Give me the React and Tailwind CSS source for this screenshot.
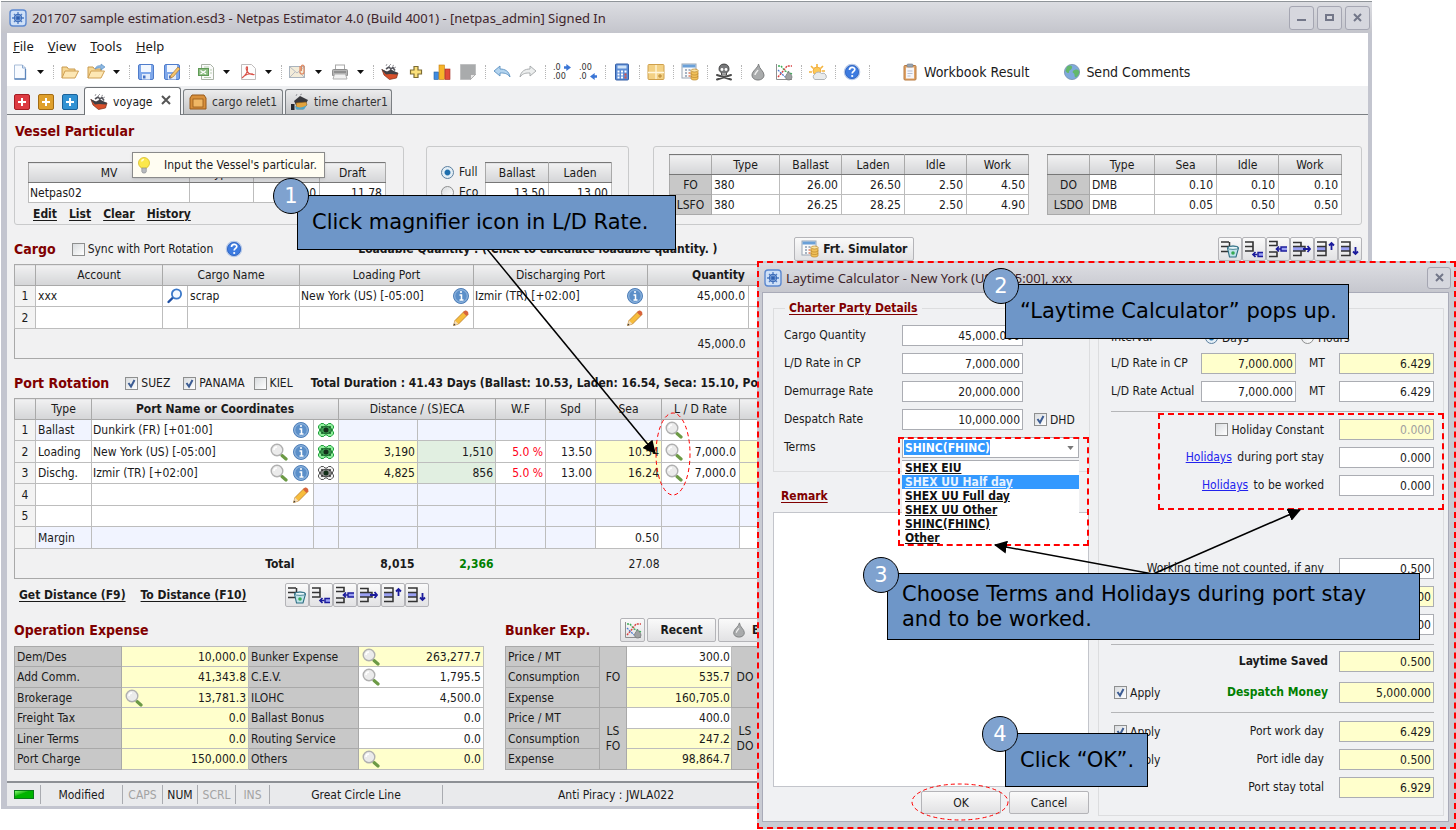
import clsx from "clsx";

// ---------- small icons ----------

function Svg({ size = "size-[18px]", children }) {
  return (
    <svg viewBox="0 0 18 18" className={clsx("block shrink-0", size)} fill="none" aria-hidden="true">
      {children}
    </svg>
  );
}

const AppIcon = () => (
  <Svg>
    <rect x="1" y="1" width="16" height="16" rx="3" fill="#cfe0f7" stroke="#5c88cf" strokeWidth="1.4" />
    <path d="M9 3v12M3 9h12M5 5l8 8M13 5l-8 8" stroke="#4f7dc6" strokeWidth="1.3" />
    <circle cx="9" cy="9" r="3.6" stroke="#3f6db8" strokeWidth="1.2" />
    <circle cx="9" cy="9" r="1.6" fill="#2f5fae" />
  </Svg>
);

const NewIcon = () => (
  <Svg>
    <path d="M3.5 2h8l3 3v11h-11z" fill="#f8fbff" stroke="#a8bdd8" />
    <path d="M14.5 6v10h-11" stroke="#5c86bc" strokeWidth="1.3" />
    <path d="M11.5 2v3h3" stroke="#8aa8cf" />
  </Svg>
);

const FolderIcon = ({ arrow }) => (
  <Svg>
    <path d="M1 15V4h5l1.5 2H14v2" fill="#f7d894" stroke="#c99a4e" />
    <path d="M1 15l3-7h13.500l-3.500 7z" fill="#fde7b4" stroke="#cf9f52" />
    {arrow && <path d="M8 6c1-3 4-4 6-3V1l4 3-4 3V5c-2-.6-4 0-6 1z" fill="#8db8e3" stroke="#4f86bd" strokeWidth=".6" />}
  </Svg>
);

const SaveIcon = ({ edit }) => (
  <Svg>
    <rect x="1.500" y="1.500" width="15" height="15" rx="1.500" fill="#7fa8ea" stroke="#4f7ccb" />
    <rect x="4" y="2" width="10" height="7" fill="#f2f7fe" />
    <rect x="5" y="11" width="8" height="5.500" fill="#e3ecfa" />
    <rect x="6" y="12.500" width="2.500" height="3" fill="#4572c4" />
    {edit && <path d="M7 15l1-3 7-8 2 2-7 8z" fill="#f5c46b" stroke="#a6763a" strokeWidth=".7" />}
  </Svg>
);

const ExcelIcon = () => (
  <Svg>
    <path d="M4.500 1.500h9l3 3v12h-12z" fill="#fafafa" stroke="#a9b3a5" />
    <path d="M7 4h5M7 14.500h7M13 7h2M13 10h2" stroke="#b7cdb0" />
    <rect x="1.500" y="5.500" width="10" height="7" fill="#8cbd82" stroke="#5f9a56" />
    <path d="M3.500 7.500l5.500 3.500M9 7.500L3.500 11" stroke="#fff" strokeWidth="1.300" />
  </Svg>
);

const PdfIcon = () => (
  <Svg>
    <path d="M2.500 1.500h10l4 4v11h-14z" fill="#fdfdfd" stroke="#c0bcbc" />
    <path d="M3 15c4-3 6-7 5.500-10.500C8 3 6.500 4 7.500 7c1 2.500 3.500 5 8 4.500M5 13c3-2 6-2.500 9-2" stroke="#d9534a" strokeWidth="1.100" />
  </Svg>
);

const MailIcon = () => (
  <Svg>
    <rect x=".5" y="3.500" width="15" height="11" fill="#f3ecd9" stroke="#a9b3bd" />
    <path d="M1 4l7 6 7-6M1 14l5-5M15 14l-5-5" stroke="#b9bcc2" />
    <path d="M11 3v6a2 2 0 004 0V3.500a1.300 1.300 0 00-2.600 0V8" stroke="#e08a63" strokeWidth="1.200" />
  </Svg>
);

const PrintIcon = () => (
  <Svg>
    <rect x="4.500" y="2" width="9" height="5" fill="#fff" stroke="#a8a8a8" />
    <path d="M1.500 7.500q0-1 1-1h13q1 0 1 1v5h-15z" fill="#b4b4b4" stroke="#8f8f8f" />
    <path d="M3.500 11h11l1.500 5h-14z" fill="#f1f1f1" stroke="#b0b0b0" />
    <path d="M3 9h12" stroke="#6c6c6c" />
  </Svg>
);

const ShipIcon = () => (
  <Svg>
    <path d="M1 6.500l5 3 11 0.500-1.500 5-7 1.500L3 12z" fill="#d8502b" stroke="#7e2c15" strokeWidth=".7" />
    <path d="M0 6l6 2.500 4-2 7 3.500-1 1.500-7-.5-4 .5z" fill="#3f3f44" />
    <path d="M5 6l3-2 2 2M9 6.500l3-2 2 3" stroke="#55555c" strokeWidth="1.600" />
    <path d="M5 3l1-2M8 3l2-2M11 3.500l2-1.500M13 5l2-1" stroke="#9d9da2" />
  </Svg>
);

const GoldPlusIcon = () => (
  <Svg>
    <path d="M7 3.500h4V7h3.500v4H11v3.500H7V11H3.500V7H7z" fill="#fbe07a" stroke="#7d6c33" strokeWidth="1.200" />
  </Svg>
);

const BarsIcon = () => (
  <Svg>
    <rect x="1" y="9" width="4.500" height="7.500" fill="#3f8be0" stroke="#24629f" strokeWidth=".6" />
    <rect x="6" y="2" width="5.500" height="14.500" fill="#f7b429" stroke="#bf7c13" strokeWidth=".6" />
    <rect x="12" y="6" width="5" height="10.500" fill="#e04a3a" stroke="#a22a1e" strokeWidth=".6" />
  </Svg>
);

const NoteIcon = () => (
  <Svg>
    <path d="M1.500 1.500h15v10l-5 5h-10z" fill="#a9abac" stroke="#bfc0c1" />
    <path d="M16.500 11.500h-5v5z" fill="#e8e8e8" stroke="#999" strokeWidth=".6" />
  </Svg>
);

const UndoIcon = () => (
  <Svg>
    <path d="M1 8l6-5v3c5 0 9 2 10 8-3-4-6-4-10-4v3z" fill="#b3d4ef" stroke="#5e92c2" strokeWidth=".9" />
  </Svg>
);

const RedoIcon = () => (
  <Svg>
    <path d="M17 8l-6-5v3C6 6 2 8 1 14c3-4 6-4 10-4v3z" fill="#eceeee" stroke="#a3a6a8" strokeWidth=".9" />
  </Svg>
);

// decimal point buttons, digits stay live text
const DecimalIcon = ({ more }) => (
  <span className="relative block w-[18px] text-left text-[9px] leading-[9px] text-[#333]">
    <span className="block">{more ? ".0" : ".00"}</span>
    <span className="block">{more ? ".00" : ".0"}</span>
    <svg
      viewBox="0 0 6 6"
      className={clsx("absolute right-0 size-[7px]", more ? "top-px" : "bottom-px")}
      aria-hidden="true"
    >
      <path d={more ? "M0 2h2V0l4 3-4 3V4H0z" : "M6 2H4V0L0 3l4 3V4h2z"} fill="#3b76d6" />
    </svg>
  </span>
);

const CalcIcon = () => (
  <Svg>
    <rect x="2.500" y="1" width="13" height="16" rx="1" fill="#5d8dd6" stroke="#345fa6" />
    <rect x="4.500" y="2.500" width="9" height="3" fill="#cfe3f8" />
    <g fill="#fff">
      <rect x="4.500" y="7.500" width="2" height="2" />
      <rect x="8" y="7.500" width="2" height="2" />
      <rect x="11.500" y="7.500" width="2" height="2" />
      <rect x="4.500" y="10.500" width="2" height="2" />
      <rect x="8" y="10.500" width="2" height="2" />
      <rect x="4.500" y="13.500" width="2" height="2" />
      <rect x="8" y="13.500" width="2" height="2" />
    </g>
    <rect x="11.500" y="10.500" width="2" height="2" fill="#e05345" />
    <rect x="11.500" y="13.500" width="2" height="2" fill="#e05345" />
  </Svg>
);

const GridIcon = () => (
  <Svg>
    <rect x="1" y="1.500" width="16" height="15" rx="1" fill="#f3d184" stroke="#cfa04c" />
    <path d="M9 2v14M1 9.500h16" stroke="#fff6dc" strokeWidth="1.300" />
    <path d="M13 11v4M11 13h4" stroke="#b78432" />
  </Svg>
);

const SimIcon = () => (
  <Svg>
    <rect x="1" y="1" width="14" height="14" fill="#fafafa" stroke="#9aa5b3" />
    <rect x="1.500" y="1.500" width="13" height="3" fill="#6aa0d8" />
    <path d="M4 7h2M7.500 7h2M4 10h2M4 13h2" stroke="#8b9bb0" strokeWidth="1.500" />
    <path d="M7.500 10h2M7.500 13h2" stroke="#de7b5a" strokeWidth="1.500" />
    <path d="M10 7.500v8c0 2 7 2 7 0v-8" fill="#f1c15a" stroke="#b8842b" strokeWidth=".7" />
    <ellipse cx="13.500" cy="7.500" rx="3.500" ry="1.500" fill="#fbe3a0" stroke="#b8842b" strokeWidth=".7" />
    <path d="M10 10.500c0 2 7 2 7 0M10 13c0 2 7 2 7 0" stroke="#b8842b" strokeWidth=".7" />
  </Svg>
);

const SkullIcon = () => (
  <Svg>
    <path d="M2 12l14 4.500M16 12L2 16.500" stroke="#4b4b4b" strokeWidth="2" strokeLinecap="round" />
    <path d="M9 1C5.500 1 4 3.500 4 6c0 2 1 3 2.500 3.700V12h5V9.700C13 9 14 8 14 6c0-2.500-1.500-5-5-5z" fill="#77787a" stroke="#333" strokeWidth=".8" />
    <circle cx="7" cy="6.500" r="1.400" fill="#fff" />
    <circle cx="11" cy="6.500" r="1.400" fill="#fff" />
    <path d="M8 10v2M10 10v2" stroke="#eee" strokeWidth=".8" />
  </Svg>
);

const DropIcon = ({ size }) => (
  <Svg size={size}>
    <path d="M9.500 1C9 5 3 8 3 12c0 3 2.500 5 6 5s6-2 6-5c0-4-5-6-5.500-11z" fill="#a9abac" stroke="#7b7d7e" />
    <path d="M6 12c0-2 2-3 3-5" stroke="#eee" strokeWidth="1.400" />
  </Svg>
);

const TrendIcon = () => (
  <Svg>
    <path d="M1.500 1v15.500H17" stroke="#8e8e8e" />
    <path d="M3 3h3l4 5 7 3" stroke="#3fae5a" strokeDasharray="2 1" strokeWidth="1.400" />
    <path d="M3 14l6-7 3-4h5" stroke="#d94343" strokeDasharray="2 1" strokeWidth="1.400" />
    <path d="M3 7l4 4 3 3" stroke="#4a7ad0" strokeDasharray="2 1" strokeWidth="1.300" />
    <path d="M13.500 8c0 2-3 3.500-3 6 0 1.700 1.500 3 3.300 3s3.200-1.300 3.200-3c0-2.500-3-3.500-3.500-6z" fill="#9fa1a2" stroke="#6f7172" strokeWidth=".7" />
  </Svg>
);

const SunIcon = () => (
  <Svg>
    <path d="M8 1v3M2 3l2.500 2.500M14 3l-2.500 2.500M0 9h3M13 8h3" stroke="#f4b43c" strokeWidth="1.600" />
    <circle cx="8" cy="8" r="4" fill="#fcc858" stroke="#ee9f2a" strokeWidth=".7" />
    <path d="M6 16.500a3 3 0 010-5.500 4 4 0 016.500-.5 3 3 0 013 6z" fill="#e9ebec" stroke="#b1b5b8" />
  </Svg>
);

const HelpIcon = () => (
  <Svg>
    <circle cx="9" cy="9" r="7.500" fill="#3d7be0" stroke="#b5c8e8" strokeWidth="1.600" />
    <circle cx="9" cy="9" r="6.600" stroke="#2b5fbd" strokeWidth=".8" />
    <path d="M6.500 7c0-3.500 5.300-3.300 5.300-.5 0 1.800-2.600 2-2.600 4" stroke="#fff" strokeWidth="1.700" />
    <circle cx="9.200" cy="13" r="1.100" fill="#fff" />
  </Svg>
);

const ClipboardIcon = () => (
  <Svg>
    <rect x="3" y="2.500" width="12" height="14.500" rx="1" fill="#e0a468" stroke="#b87a40" />
    <rect x="5" y="4.500" width="8" height="11" fill="#f6f6fa" />
    <rect x="6" y="1" width="6" height="3" rx="1" fill="#9aa6b2" stroke="#6f7b88" strokeWidth=".6" />
    <path d="M6.500 8h5M6.500 10.500h5M6.500 13h3" stroke="#b5bdd0" />
  </Svg>
);

const GlobeIcon = () => (
  <Svg>
    <circle cx="9" cy="9" r="7.600" fill="#7fa9dc" stroke="#7590ad" strokeWidth=".8" />
    <path d="M4 3.500c3-2 6-1 5 1.500s-3 2-3 4-2 1-3.500-1M10 8c2-2 5-2 6 0s-1 5-3 6.500c-2 0-1-3-2-4s-2-1-1-2.500z" fill="#63b86b" />
  </Svg>
);

const BulbIcon = () => (
  <Svg>
    <circle cx="9" cy="7" r="5.500" fill="#fbe84c" stroke="#d6ba25" strokeWidth=".8" />
    <path d="M6.500 5.500c.5-1.500 1.500-2 2.500-2" stroke="#fffbd0" strokeWidth="1.300" />
    <path d="M6.800 12h4.500v3.500l-1 1.500H7.800l-1-1.500z" fill="#b8bbbf" stroke="#85888c" strokeWidth=".6" />
  </Svg>
);

const CrateIcon = () => (
  <Svg>
    <path d="M3 2h12l2 3v11H1V5z" fill="#d8903c" stroke="#96591a" />
    <rect x="4" y="6" width="10" height="8" fill="#f0b765" stroke="#96591a" strokeWidth=".8" />
  </Svg>
);

const CharterIcon = () => (
  <Svg>
    <path d="M3 8l6-5 8 4-3 5H5z" fill="#38383d" />
    <path d="M5 10l10-1 1 3-4 4H6z" fill="#e2a33c" stroke="#8a5d19" strokeWidth=".6" />
    <path d="M4 13c3 2 8 2 12-1l-3 4.500H5z" fill="#4fa4c6" />
    <rect x="0" y="11" width="3.500" height="6" fill="#23272f" />
    <path d="M5 3l1-2M9 2l2-1" stroke="#9a9aa0" />
  </Svg>
);

const MagnifierIcon = () => (
  <Svg>
    <path d="M12 12.500l4 3.500" stroke="#6c9a45" strokeWidth="3.200" strokeLinecap="round" />
    <circle cx="7" cy="7" r="5.800" fill="#ebebeb" stroke="#b0b0b0" strokeWidth="1.400" />
    <path d="M4 7c0-2 1-3 3-3" stroke="#fff" strokeWidth="1.500" />
  </Svg>
);

const BlueSearchIcon = () => (
  <Svg>
    <path d="M7 10.500L2.500 15" stroke="#1e4fa3" strokeWidth="2.400" strokeLinecap="round" />
    <circle cx="10.500" cy="7" r="4.600" fill="#f3f9ff" stroke="#3a78c9" strokeWidth="1.800" />
  </Svg>
);

const InfoIcon = () => (
  <Svg>
    <circle cx="9" cy="9" r="7.500" fill="#5b8fc9" stroke="#4f7fb8" />
    <circle cx="9" cy="9" r="6.300" stroke="#a9c8e8" strokeWidth=".8" />
    <path d="M9 4v2M7.500 8H9.500v5M7.500 13h4" stroke="#fff" strokeWidth="1.500" />
  </Svg>
);

const PencilIcon = () => (
  <Svg>
    <path d="M1.500 16.500l1.500-5L12.500 2l3.500 3.500-9.500 9.500z" fill="#f7bd3c" stroke="#b77b28" strokeWidth=".8" />
    <path d="M12.500 2c1.500-1.500 5 1.500 3.500 3.500l-1.500 1.500-3.500-3.500z" fill="#d8643c" />
    <path d="M1.500 16.500l1.500-5 3.500 3.500z" fill="#f3dcb8" />
    <path d="M1.500 16.500l.6-2 1.500 1.400z" fill="#333" />
  </Svg>
);

const TargetIcon = ({ on }) => (
  <Svg>
    <path
      d="M4 2.500h2.500l1.500 1.500h2l1.500-1.500h2.500l2.500 2.500v2l-1 1v2l1 1v2l-2.500 2.500h-2.500l-1.500-1.500h-2l-1.500 1.500H4l-2.500-2.500v-2l1-1v-2l-1-1V5z"
      fill={on ? "#8df09a" : "#f2f2f2"}
      stroke={on ? "#23a03f" : "#555"}
    />
    <ellipse cx="9" cy="9" rx="5.500" ry="3.800" fill={on ? "#3c9a50" : "#8d8d8d"} stroke={on ? "#125c24" : "#333"} strokeWidth=".9" />
    <circle cx="9" cy="9" r="2.500" fill="#14301a" />
    <circle cx="5" cy="6" r="1" fill={on ? "#125c24" : "#333"} />
    <circle cx="13" cy="6" r="1" fill={on ? "#125c24" : "#333"} />
    <circle cx="5" cy="12" r="1" fill={on ? "#125c24" : "#333"} />
    <circle cx="13" cy="12" r="1" fill={on ? "#125c24" : "#333"} />
  </Svg>
);

const rowIcons = {
  "Delete row": (
    <>
      <path d="M0 2h8M0 6.500h8M0 11.500h8M8.500 2v4" stroke="#333" strokeWidth="1.500" />
      <path d="M6.500 8l2 9h6.500l2.500-9c-1-2.500-10-2.500-11 0z" fill="#bfe3ea" stroke="#2c6d83" strokeWidth="1.100" />
      <ellipse cx="12" cy="7.800" rx="5" ry="1.600" fill="#e9f7fa" stroke="#2c6d83" strokeWidth=".8" />
      <circle cx="12" cy="13" r="1.800" fill="#35a952" />
    </>
  ),
  "Append row": (
    <>
      <path d="M0 2h8v9H0M0 6.500h8" stroke="#333" strokeWidth="1.600" />
      <path d="M7.500 14.500h5M10.500 12L8 14.500l2.500 2.500" stroke="#1b1b9c" strokeWidth="1.700" />
      <path d="M18 12.500h-5v4h5" fill="#9aa0f2" stroke="#1b1b9c" strokeWidth="1.400" />
    </>
  ),
  "Insert row": (
    <>
      <path d="M0 1.500h8v4H0M0 12h8v4.500H0" stroke="#333" strokeWidth="1.600" />
      <path d="M7 9h5M10 6.500L7.500 9l2.500 2.500" stroke="#1b1b9c" strokeWidth="1.700" />
      <path d="M18 7h-6v4h6" fill="#9aa0f2" stroke="#1b1b9c" strokeWidth="1.400" />
    </>
  ),
  "Take row out": (
    <>
      <path d="M0 2.500h8v4M8 11v4.500H0" stroke="#333" strokeWidth="1.600" />
      <path d="M0 6.500h12v4.500H0" fill="#9aa0f2" stroke="#333" strokeWidth="1.500" />
      <path d="M10 9h7M14.500 6L17 9l-2.500 3" stroke="#1b1b9c" strokeWidth="1.800" />
    </>
  ),
  "Move row up": (
    <>
      <rect x="0" y="6.500" width="9" height="4.500" fill="#9aa0f2" />
      <path d="M0 2h9v13.500H0M0 6.500h9M0 11h9" stroke="#333" strokeWidth="1.500" />
      <path d="M14.500 10V3M12 5.500L14.500 3 17 5.500" stroke="#1b1b9c" strokeWidth="1.800" />
    </>
  ),
  "Move row down": (
    <>
      <rect x="0" y="6.500" width="9" height="4.500" fill="#9aa0f2" />
      <path d="M0 2h9v13.500H0M0 6.500h9M0 11h9" stroke="#333" strokeWidth="1.500" />
      <path d="M14.500 7v7M12 11.500l2.500 2.500 2.500-2.500" stroke="#1b1b9c" strokeWidth="1.800" />
    </>
  ),
};

// ---------- shared controls ----------

const HEAD = "bg-linear-to-b from-[#f1f1f2] to-[#d4d5d7] font-normal text-center border border-[#a9a9a9] p-0";
const CELL = "border border-[#bdbdbd] p-0";
const GRAYCELL = "border border-[#a9a9a9] bg-[#c8c8c8] p-0";
const YELLOW = "bg-[#ffffcc]";
const GREEN = "bg-[#e1efe1]";
const PALE = "bg-[#f1f4ff]";
const BTN =
  "flex items-center justify-center rounded-[2px] border border-[#b4b4b8] bg-linear-to-b from-[#fafafa] to-[#e2e2e4]";

function Check({ label, checked, gap = "gap-[3px]", className }) {
  return (
    <label className={clsx("flex items-center", gap, className)}>
      <span className="relative flex size-[13px] shrink-0">
        <input
          type="checkbox"
          defaultChecked={checked}
          className="peer size-[13px] appearance-none border border-[#8e8f8f] bg-linear-to-br from-[#d9dcdf] to-white"
        />
        <svg
          viewBox="0 0 13 13"
          className="pointer-events-none absolute inset-0 hidden size-[13px] peer-checked:block"
          fill="none"
          aria-hidden="true"
        >
          <path d="M3.500 6l2.500 3.500L9.500 3" stroke="#3c5c93" strokeWidth="2" />
        </svg>
      </span>
      <span>{label}</span>
    </label>
  );
}

function Radio({ label, name, checked, gap = "gap-[5px]" }) {
  return (
    <label className={clsx("flex items-center", gap)}>
      <input
        type="radio"
        name={name}
        defaultChecked={checked}
        className="size-[13px] appearance-none rounded-full border border-[#8e8f8f] bg-linear-to-br from-[#d9dcdf] to-white checked:border-[#5b7f9f] checked:bg-[radial-gradient(circle,#1f6fae_0_30%,#e3eef6_45%)]"
      />
      <span>{label}</span>
    </label>
  );
}

function RowTools() {
  return (
    <div className="flex">
      {Object.entries(rowIcons).map(([name, icon]) => (
        <button key={name} type="button" aria-label={name} className={clsx(BTN, "h-6 w-6")}>
          <Svg>{icon}</Svg>
        </button>
      ))}
    </div>
  );
}

const Title = ({ children }) => <h2 className="text-[14px] font-bold text-[#800000]">{children}</h2>;

// ---------- main window ----------

const toolbar = [
  ["New", NewIcon, { caret: true }],
  null,
  ["Open", FolderIcon],
  ["Open recent", FolderIcon, { caret: true, arrow: true }],
  null,
  ["Save", SaveIcon],
  ["Save as", SaveIcon, { edit: true }],
  null,
  ["Export to Excel", ExcelIcon, { caret: true }],
  ["Export to PDF", PdfIcon, { caret: true }],
  null,
  ["Send mail", MailIcon, { caret: true }],
  ["Print", PrintIcon, { caret: true }],
  null,
  ["Voyage", ShipIcon],
  ["Add", GoldPlusIcon],
  ["Chart", BarsIcon],
  ["Note", NoteIcon],
  null,
  ["Undo", UndoIcon],
  ["Redo", RedoIcon],
  null,
  ["More decimals", DecimalIcon, { more: true }],
  ["Fewer decimals", DecimalIcon],
  null,
  ["Calculator", CalcIcon],
  null,
  ["Layout", GridIcon],
  null,
  ["Simulator", SimIcon],
  null,
  ["Piracy", SkullIcon],
  null,
  ["Bunker", DropIcon],
  ["Bunker trend", TrendIcon],
  null,
  ["Weather", SunIcon],
  null,
  ["Help", HelpIcon],
  null,
];

function TitleBar() {
  return (
    <header className="flex h-8 items-center gap-[5px] border-t border-[#8f9499] bg-linear-to-b from-[#dcdde2] to-[#c4c5cc] pr-[2px] pl-[8px]">
      <AppIcon />
      <h1 className="grow text-[13px] text-[#40242a] [font-family:'Noto_Sans',sans-serif]">
        201707 sample estimation.esd3 - Netpas Estimator 4.0 (Build 4001) - [netpas_admin] Signed In
      </h1>
      <div className="flex gap-[3px]">
        {["M2 9h9", "M3 4h7v5H3z", "M3 3l7 7M10 3l-7 7"].map((d, i) => (
          <button
            key={d}
            type="button"
            aria-label={["Minimize", "Maximize", "Close"][i]}
            className="flex h-6 w-[25px] items-center justify-center rounded-[3px] border border-[#a5a6b2] bg-[#d6d7de]"
          >
            <svg viewBox="0 0 13 13" className="size-[13px]" fill="none" aria-hidden="true">
              <path d={d} stroke="#737789" strokeWidth="2" />
            </svg>
          </button>
        ))}
      </div>
    </header>
  );
}

function Toolbar() {
  return (
    <div className="flex h-[28px] items-center">
      {toolbar.map((item, i) => {
        if (!item) {
          return (
            <span key={i} className="flex w-2 shrink-0 justify-center">
              <span className="h-[14px] border-l border-dotted border-[#b5b5b5]" />
            </span>
          );
        }
        const [name, Icon, opts = {}] = item;
        const { caret, ...rest } = opts;
        return (
          <button key={name} type="button" aria-label={name} className="flex shrink-0 items-center">
            <span className="flex w-[26px] justify-center">
              <Icon {...rest} />
            </span>
            {caret && (
              <svg viewBox="0 0 16 8" className="h-2 w-4" aria-hidden="true">
                <path d="M4 2h7l-3.500 4z" fill="#111" />
              </svg>
            )}
          </button>
        );
      })}
      <button type="button" className="ml-[28px] flex items-center gap-[5px] text-[14px]">
        <ClipboardIcon />
        Workbook Result
      </button>
      <button type="button" className="ml-[34px] flex items-center gap-[5px] text-[14px]">
        <GlobeIcon />
        Send Comments
      </button>
    </div>
  );
}

function Tabs() {
  return (
    <div className="flex h-[29px] items-end border-b border-[#7b7f83] bg-[#eff0f2] pl-[7px]">
      <div className="mr-[6px] flex gap-2 pb-1">
        {[
          ["Add voyage", "border-[#a51c22] bg-[#dd3b42]"],
          ["Add cargo relet", "border-[#a36c14] bg-[#dfa02c]"],
          ["Add time charter", "border-[#1b6299] bg-[#3192d3]"],
        ].map(([name, color]) => (
          <button
            key={name}
            type="button"
            aria-label={name}
            className={clsx("flex size-4 items-center justify-center rounded-[2px] border", color)}
          >
            <svg viewBox="0 0 10 10" className="size-[10px]" aria-hidden="true">
              <path d="M5 1v8M1 5h8" stroke="#fff" strokeWidth="2" />
            </svg>
          </button>
        ))}
      </div>
      <div className="-mb-px flex h-[28px] w-[97px] items-center gap-[5px] rounded-t-[3px] border border-b-0 border-[#6f7377] bg-white pl-[5px]">
        <ShipIcon />
        <span>voyage</span>
        <button type="button" aria-label="Close tab" className="mb-1 ml-[3px]">
          <svg viewBox="0 0 10 10" className="size-[10px]" aria-hidden="true">
            <path d="M1 1l8 8M9 1L1 9" stroke="#555" strokeWidth="2" />
          </svg>
        </button>
      </div>
      {[
        [CrateIcon, "cargo relet1", "w-[100px]"],
        [CharterIcon, "time charter1", "w-[107px]"],
      ].map(([Icon, name, w]) => (
        <div
          key={name}
          className={clsx(
            "ml-[2px] flex h-[25px] items-center gap-[5px] rounded-t-[3px] border border-b-0 border-[#7b7f83] bg-linear-to-b from-[#ececed] to-[#c3c4c6] pl-[5px] text-[#333]",
            w
          )}
        >
          <Icon />
          <span className="whitespace-nowrap">{name}</span>
        </div>
      ))}
    </div>
  );
}

function FuelTable({ head, rows, widths }) {
  return (
    <table className="table-fixed border-collapse">
      <colgroup>
        {widths.map((w, i) => (
          <col key={i} className={w} />
        ))}
      </colgroup>
      <thead>
        <tr className="h-5">
          {head.map((h, i) => (
            <th key={i} className={clsx(HEAD, "border-t-[#777] border-b-[#777]")}>
              {h}
            </th>
          ))}
        </tr>
      </thead>
      <tbody>
        {rows.map((r) => (
          <tr key={r[0]} className="h-5 bg-white">
            {r.map((v, i) => (
              <td key={i} className={clsx(i === 0 ? GRAYCELL : CELL, i === 0 ? "text-center" : i === 1 ? "pl-[2px]" : "pr-[3px] text-right")}>
                {v}
              </td>
            ))}
          </tr>
        ))}
      </tbody>
    </table>
  );
}

const GROUP = "rounded-[3px] border border-[#c9cacb]";

function VesselParticular() {
  return (
    <section>
      <div className="flex h-[31px] items-center pl-[1px]">
        <Title>Vessel Particular</Title>
      </div>
      <div className="flex h-[79px]">
        <div className={clsx(GROUP, "relative w-[390px] pt-[15px] pl-[13px]")}>
          <table className="w-[358px] table-fixed border-collapse">
            <colgroup>
              <col className="w-[161px]" />
              <col />
              <col className="w-[66px]" />
              <col className="w-[66px]" />
            </colgroup>
            <thead>
              <tr className="h-5">
                {["MV", "Type", "DWT", "Draft"].map((h) => (
                  <th key={h} className={clsx(HEAD, "border-t-[#777] border-b-[#777]")}>
                    {h}
                  </th>
                ))}
              </tr>
            </thead>
            <tbody>
              <tr className="h-5 bg-white">
                <td className={clsx(CELL, "pl-[1px]")}>Netpas02</td>
                <td className={CELL} />
                <td className={clsx(CELL, "pr-[3px] text-right")}>0.00</td>
                <td className={clsx(CELL, "pr-[3px] text-right")}>11.78</td>
              </tr>
            </tbody>
          </table>
          <div className="flex gap-3 pt-[3px] pl-[5px] font-bold">
            {["Edit", "List", "Clear", "History"].map((t) => (
              <a key={t} href={`#${t.toLowerCase()}`} className="underline underline-offset-2">
                {t}
              </a>
            ))}
          </div>
          <div
            role="tooltip"
            className="absolute top-[5px] left-[117px] flex h-[26px] w-[193px] items-center gap-[11px] border border-[#8a8a8a] bg-[#fffdf2] pl-[2px] whitespace-nowrap shadow-sm"
          >
            <BulbIcon />
            Input the Vessel's particular.
          </div>
        </div>

        <div className={clsx(GROUP, "ml-[22px] flex w-[203px] pt-[15px] pl-[14px]")}>
          <div className="w-[44px]">
            <div className="flex h-5 items-center"><Radio name="speed" label="Full" checked /></div>
            <div className="flex h-5 items-center"><Radio name="speed" label="Eco" /></div>
          </div>
          <table className="h-[41px] w-[127px] table-fixed border-collapse">
            <thead>
              <tr className="h-5">
                <th className={clsx(HEAD, "border-t-[#777] border-b-[#777]")}>Ballast</th>
                <th className={clsx(HEAD, "border-t-[#777] border-b-[#777]")}>Laden</th>
              </tr>
            </thead>
            <tbody>
              <tr className="h-5 bg-white">
                <td className={clsx(CELL, "pr-[3px] text-right")}>13.50</td>
                <td className={clsx(CELL, "pr-[3px] text-right")}>13.00</td>
              </tr>
            </tbody>
          </table>
        </div>

        <div className={clsx(GROUP, "ml-[24px] flex grow items-start gap-[18px] pt-[7px] pl-[15px]")}>
          <FuelTable
            head={["", "Type", "Ballast", "Laden", "Idle", "Work"]}
            widths={["w-[42px]", "w-[68px]", "w-[62px]", "w-[63px]", "w-[62px]", "w-[62px]"]}
            rows={[
              ["FO", "380", "26.00", "26.50", "2.50", "4.50"],
              ["LSFO", "380", "26.25", "28.25", "2.50", "4.90"],
            ]}
          />
          <FuelTable
            head={["", "Type", "Sea", "Idle", "Work"]}
            widths={["w-[42px]", "w-[65px]", "w-[62px]", "w-[62px]", "w-[63px]"]}
            rows={[
              ["DO", "DMB", "0.10", "0.10", "0.10"],
              ["LSDO", "DMB", "0.05", "0.50", "0.50"],
            ]}
          />
        </div>
      </div>
    </section>
  );
}

function PortCell({ name, children, className }) {
  return (
    <td className={clsx(CELL, "pl-[1px]", className)}>
      <div className="flex items-center justify-between">
        <span>{name}</span>
        <span className="flex gap-1 pr-[3px]">{children}</span>
      </div>
    </td>
  );
}

function Cargo() {
  return (
    <section className="pt-[10px]">
      <div className="mb-px flex h-[28px] items-center">
        <Title>Cargo</Title>
        <Check label="Sync with Port Rotation" className="mr-3 ml-4" />
        <HelpIcon />
        <p className="ml-[115px] w-[420px] font-bold whitespace-nowrap">
          Loadable Quantity : ( Click to calculate loadable quantity. )
        </p>
        <button type="button" className={clsx(BTN, "ml-[16px] h-6 w-[120px] gap-[4px] font-bold")}>
          <SimIcon />
          Frt. Simulator
        </button>
        <div className="ml-auto">
          <RowTools />
        </div>
      </div>
      <table className="w-full table-fixed border-collapse border border-[#a9a9a9]">
        <colgroup>
          <col className="w-[21px]" />
          <col className="w-[127px]" />
          <col className="w-[25px]" />
          <col className="w-[112px]" />
          <col className="w-[174px]" />
          <col className="w-[174px]" />
          <col className="w-[101px]" />
          <col />
        </colgroup>
        <thead>
          <tr className="h-[21px]">
            <th className={HEAD} />
            <th className={HEAD}>Account</th>
            <th className={HEAD} colSpan={2}>Cargo Name</th>
            <th className={HEAD}>Loading Port</th>
            <th className={HEAD}>Discharging Port</th>
            <th className={clsx(HEAD, "pl-[44px] text-left font-bold!")} colSpan={2}>Quantity</th>
          </tr>
        </thead>
        <tbody>
          <tr className="h-[21px] bg-white">
            <td className={clsx(CELL, "bg-[#f3f3f3] text-center")}>1</td>
            <td className={clsx(CELL, "pl-[2px]")}>xxx</td>
            <td className={CELL}><div className="flex justify-center"><BlueSearchIcon /></div></td>
            <td className={clsx(CELL, "pl-[2px]")}>scrap</td>
            <PortCell name="New York (US) [-05:00]"><InfoIcon /></PortCell>
            <PortCell name="Izmir (TR) [+02:00]"><InfoIcon /></PortCell>
            <td className={clsx(CELL, "pr-[3px] text-right")}>45,000.0</td>
            <td className={CELL} />
          </tr>
          <tr className="h-[22px] bg-white">
            <td className={clsx(CELL, "bg-[#f3f3f3] text-center")}>2</td>
            <td className={CELL} />
            <td className={CELL} />
            <td className={CELL} />
            <PortCell><PencilIcon /></PortCell>
            <PortCell><PencilIcon /></PortCell>
            <td className={CELL} />
            <td className={CELL} />
          </tr>
        </tbody>
        <tfoot>
          <tr className="h-[30px]">
            <td colSpan={6} />
            <td className="pr-[3px] text-right">45,000.0</td>
            <td />
          </tr>
        </tfoot>
      </table>
    </section>
  );
}

const legs = [
  { no: 1, type: "Ballast", port: "Dunkirk (FR) [+01:00]", info: true, target: "on", lens: true },
  { no: 2, type: "Loading", port: "New York (US) [-05:00]", search: true, info: true, target: "on", dist: "3,190", eca: "1,510", wf: "5.0 %", spd: "13.50", sea: "10.54", lens: true, rate: "7,000.0" },
  { no: 3, type: "Dischg.", port: "Izmir (TR) [+02:00]", search: true, info: true, target: "off", dist: "4,825", eca: "856", wf: "5.0 %", spd: "13.00", sea: "16.24", lens: true, rate: "7,000.0" },
  { no: 4, pencil: true },
  { no: 5 },
  { type: "Margin", sea: "0.50", margin: true },
];

function PortRotation() {
  return (
    <section className="pt-[9px]">
      <div className="flex h-[30px] items-center">
        <Title>Port Rotation</Title>
        <Check label="SUEZ" checked className="ml-4" />
        <Check label="PANAMA" checked className="ml-[13px]" />
        <Check label="KIEL" className="ml-[9px]" />
        <p className="ml-[18px] font-bold whitespace-nowrap">
          Total Duration : 41.43 Days (Ballast: 10.53, Laden: 16.54, Seca: 15.10, Port: 14.36)
        </p>
      </div>
      <table className="w-full table-fixed border-collapse border border-[#a9a9a9]">
        <colgroup>
          <col className="w-[21px]" />
          <col className="w-[56px]" />
          <col className="w-[222px]" />
          <col className="w-[25px]" />
          <col className="w-[79px]" />
          <col className="w-[78px]" />
          <col className="w-[50px]" />
          <col className="w-[50px]" />
          <col className="w-[66px]" />
          <col className="w-[78px]" />
          <col />
        </colgroup>
        <thead>
          <tr className="h-[21px]">
            <th className={HEAD} />
            <th className={HEAD}>Type</th>
            <th className={clsx(HEAD, "font-bold!")} colSpan={2}>Port Name or Coordinates</th>
            <th className={HEAD} colSpan={2}>Distance / (S)ECA</th>
            <th className={HEAD}>W.F</th>
            <th className={HEAD}>Spd</th>
            <th className={HEAD}>Sea</th>
            <th className={HEAD}>L / D Rate</th>
            <th className={HEAD} />
          </tr>
        </thead>
        <tbody>
          {legs.map((l, i) => {
            const blank = !l.dist && PALE;
            return (
              <tr key={i} className="bg-white odd:h-[21px] even:h-[22px]">
                <td className={clsx(CELL, "bg-[#f3f3f3] text-center")}>{l.no}</td>
                <td className={clsx(CELL, "pl-[2px]", (l.no === 1 || l.margin) && PALE)}>{l.type}</td>
                <PortCell name={l.port} className={l.margin && PALE}>
                  {l.search && <MagnifierIcon />}
                  {l.info && <InfoIcon />}
                  {l.pencil && <PencilIcon />}
                </PortCell>
                <td className={clsx(CELL, !l.target && PALE)}>
                  {l.target && <div className="flex justify-center"><TargetIcon on={l.target === "on"} /></div>}
                </td>
                <td className={clsx(CELL, "pr-[2px] text-right", l.dist ? YELLOW : PALE)}>{l.dist}</td>
                <td className={clsx(CELL, "pr-[2px] text-right", l.eca ? GREEN : PALE)}>{l.eca}</td>
                <td className={clsx(CELL, "pr-[2px] text-right text-[#ff0018]", blank)}>{l.wf}</td>
                <td className={clsx(CELL, "pr-[3px] text-right", blank)}>{l.spd}</td>
                <td className={clsx(CELL, "pr-[2px] text-right", l.margin ? "bg-white" : l.dist ? YELLOW : PALE)}>{l.sea}</td>
                <td className={clsx(CELL, "pr-[3px]", !l.lens && PALE)}>
                  {l.lens && (
                    <div className="flex items-center justify-between pl-[3px]">
                      <button type="button" aria-label={`Laytime of leg ${l.no}`}><MagnifierIcon /></button>
                      <span>{l.rate}</span>
                    </div>
                  )}
                </td>
                <td className={clsx(CELL, l.dist ? YELLOW : l.no > 3 && PALE)} />
              </tr>
            );
          })}
        </tbody>
        <tfoot>
          <tr className="h-[30px] font-bold">
            <td colSpan={3} className="pr-[19px] text-right">Total</td>
            <td />
            <td className="pr-[3px] text-right">8,015</td>
            <td className="pr-[2px] text-right text-[#008000]">2,366</td>
            <td />
            <td />
            <td className="pr-[2px] text-right font-normal">27.08</td>
            <td />
            <td />
          </tr>
        </tfoot>
      </table>
      <div className="flex h-[31px] items-center pl-[5px] font-bold">
        <a href="#get-distance" className="underline underline-offset-2">Get Distance (F9)</a>
        <a href="#to-distance" className="mr-[39px] ml-[15px] underline underline-offset-2">To Distance (F10)</a>
        <RowTools />
      </div>
    </section>
  );
}

const expenses = [
  ["Dem/Des", "10,000.0", false, "Bunker Expense", "263,277.7", true, true],
  ["Add Comm.", "41,343.8", false, "C.E.V.", "1,795.5", true, false],
  ["Brokerage", "13,781.3", true, "ILOHC", "4,500.0", false, false],
  ["Freight Tax", "0.0", false, "Ballast Bonus", "0.0", false, false],
  ["Liner Terms", "0.0", false, "Routing Service", "0.0", false, false],
  ["Port Charge", "150,000.0", false, "Others", "0.0", true, true],
];

const bunkers = [
  ["Price / MT", "300.0", "FO", "DO"],
  ["Consumption", "535.7"],
  ["Expense", "160,705.0"],
  ["Price / MT", "400.0", "LS FO", "LS DO"],
  ["Consumption", "247.2"],
  ["Expense", "98,864.7"],
];

function AmountCell({ value, lens, yellow }) {
  return (
    <td className={clsx(CELL, "pr-[2px] pl-[3px]", yellow ? YELLOW : "bg-white")}>
      <div className="flex items-center justify-between">
        <span>{lens && <MagnifierIcon />}</span>
        <span>{value}</span>
      </div>
    </td>
  );
}

function Expenses() {
  return (
    <div className="flex pt-[3px] pb-[11px]">
      <section className="w-[470px] shrink-0">
        <div className="flex h-[33px] items-center">
          <Title>Operation Expense</Title>
        </div>
        <table className="w-full table-fixed border-collapse">
          <colgroup>
            <col className="w-[107px]" />
            <col className="w-[127px]" />
            <col className="w-[110px]" />
            <col />
          </colgroup>
          <tbody>
            {expenses.map(([a, av, aLens, b, bv, bLens, bYellow]) => (
              <tr key={a} className="odd:h-5 even:h-[21px]">
                <th className={clsx(GRAYCELL, "pl-[2px] text-left font-normal")}>{a}</th>
                <AmountCell value={av} lens={aLens} yellow />
                <th className={clsx(GRAYCELL, "pl-[2px] text-left font-normal")}>{b}</th>
                <AmountCell value={bv} lens={bLens} yellow={bYellow} />
              </tr>
            ))}
          </tbody>
        </table>
      </section>
      <section className="ml-[21px] min-w-0 grow">
        <div className="flex h-[33px] items-center">
          <div className="w-[115px]"><Title>Bunker Exp.</Title></div>
          <button type="button" aria-label="Bunker trend" className={clsx(BTN, "h-6 w-[25px]")}><TrendIcon /></button>
          <button type="button" className={clsx(BTN, "ml-[2px] h-6 w-[69px] font-bold")}>Recent</button>
          <button type="button" className={clsx(BTN, "ml-[2px] h-6 w-[90px] gap-[5px] font-bold")}>
            <DropIcon size="size-[16px]" />
            Bunker
          </button>
        </div>
        <table className="w-full table-fixed border-collapse">
          <colgroup>
            <col className="w-[94px]" />
            <col className="w-[27px]" />
            <col className="w-[105px]" />
            <col className="w-[27px]" />
            <col />
          </colgroup>
          <tbody>
            {bunkers.map(([name, value, fuel, other], i) => (
              <tr key={i} className="odd:h-5 even:h-[21px]">
                <th className={clsx(GRAYCELL, "pl-[2px] text-left font-normal")}>{name}</th>
                {fuel && <th rowSpan={3} className={clsx(GRAYCELL, "px-[3px] text-center leading-[15px] font-normal")}>{fuel}</th>}
                <td className={clsx(CELL, "pr-px text-right", i % 3 ? YELLOW : "bg-white")}>{value}</td>
                {other && <th rowSpan={3} className={clsx(GRAYCELL, "px-[3px] text-center leading-[15px] font-normal")}>{other}</th>}
                <td className={clsx(CELL, i % 3 ? YELLOW : "bg-white")} />
              </tr>
            ))}
          </tbody>
        </table>
      </section>
    </div>
  );
}

function StatusBar() {
  const cell = "flex items-center justify-center border-r border-[#a9abb0]";
  return (
    <footer className="flex h-[25px] border-t-2 border-[#8d9095] bg-[#e9eaec] py-[2px]">
      <div className={clsx(cell, "w-[34px]")}>
        <span className="h-[9px] w-[20px] border border-[#0a7a1a] bg-linear-to-br from-[#7dff6a] to-[#00b400] to-40%" />
      </div>
      <div className={clsx(cell, "w-[82px]")}>Modified</div>
      <div className={clsx(cell, "w-[40px] text-[#a3a3a3]")}>CAPS</div>
      <div className={clsx(cell, "w-[35px]")}>NUM</div>
      <div className={clsx(cell, "w-[38px] text-[#a3a3a3]")}>SCRL</div>
      <div className={clsx(cell, "w-[34px] text-[#a3a3a3]")}>INS</div>
      <div className={clsx(cell, "w-[173px]")}>Great Circle Line</div>
      <div className={clsx(cell, "w-[347px]")}>Anti Piracy : JWLA022</div>
    </footer>
  );
}

// ---------- laytime dialog ----------

function Field({ id, value, yellow, dim, width = "w-[95px]", label }) {
  return (
    <input
      id={id}
      aria-label={label}
      defaultValue={value}
      readOnly={yellow}
      className={clsx(
        "h-[21px] shrink-0 border border-[#abadb3] pr-[2px] text-right",
        width,
        yellow ? YELLOW : "bg-white",
        dim && "text-[#a0a0a0]"
      )}
    />
  );
}

const LINE = "h-[28px] flex items-start";
const TEXT = "h-[21px] leading-[20px]";

function Terms() {
  const options = ["SHEX EIU", "SHEX UU Half day", "SHEX UU Full day", "SHEX UU Other", "SHINC(FHINC)", "Other"];
  return (
    <div className="relative">
      <select
        id="terms"
        defaultValue="SHINC(FHINC)"
        className="h-[21px] w-[177px] appearance-none border border-[#abadb3] bg-white bg-[linear-gradient(#3399ff,#3399ff)] bg-[length:86px_15px] bg-[position:1px_2px] bg-no-repeat pl-[2px] font-bold text-white"
      >
        {options.map((o) => (
          <option key={o}>{o}</option>
        ))}
      </select>
      <svg viewBox="0 0 8 5" className="pointer-events-none absolute top-[9px] right-[5px] h-[4px] w-[7px]" aria-hidden="true">
        <path d="M0 0h8L4 5z" fill="#777" />
      </svg>
      <ul className="absolute top-[23px] left-0 w-[177px] border-t border-[#abadb3] bg-white font-bold text-[#111]">
        {options.map((o, i) => (
          <li
            key={o}
            className={clsx("h-[14px] pl-[3px] leading-[14px] underline underline-offset-1", i === 1 && "bg-[#3399ff] text-[#e6f2ff]")}
          >
            {o}
          </li>
        ))}
      </ul>
    </div>
  );
}

function LaytimeDialog() {
  const rateRow = (label, id, yellow) => (
    <div className={LINE}>
      <label htmlFor={id} className={clsx(TEXT, "w-[90px]")}>{label}</label>
      <Field id={id} value="7,000.000" yellow={yellow} />
      <span className={clsx(TEXT, "w-[43px] pl-[13px]")}>MT</span>
      <Field value="6.429" yellow={yellow} label={`${label} days`} />
    </div>
  );
  const sumRow = (label, id, value, yellow, extra, gap = "mr-[15px]") => (
    <div className={clsx(LINE, "justify-end")}>
      {extra}
      <label htmlFor={id} className={clsx(TEXT, gap, "grow text-right")}>{label}</label>
      <Field id={id} value={value} yellow={yellow} />
    </div>
  );

  return (
    <div
      role="dialog"
      aria-label="Laytime Calculator"
      className="absolute top-[261px] left-[757px] w-[699px] border-2 border-dashed border-[#ff0000] bg-[#c9cbd3]"
    >
      <div className="flex h-[29px] items-center gap-[4px] bg-linear-to-b from-[#dcdde2] to-[#c6c7ce] pr-[3px] pl-[5px]">
        <AppIcon />
        <h2 className="grow text-[13px] text-[#40242a] [font-family:'Noto_Sans',sans-serif]">
          Laytime Calculator - New York (US) [-05:00], xxx
        </h2>
        <button
          type="button"
          aria-label="Close dialog"
          className="flex h-[22px] w-[24px] items-center justify-center rounded-[3px] border border-[#a5a6b2] bg-[#d6d7de]"
        >
          <svg viewBox="0 0 13 13" className="size-[13px]" fill="none" aria-hidden="true">
            <path d="M3 3l7 7M10 3l-7 7" stroke="#737789" strokeWidth="2" />
          </svg>
        </button>
      </div>

      <div className="mr-[5px] mb-[5px] ml-[3px] flex gap-[9px] border border-[#a9abb8] bg-[#f0f1f3] pt-[7px] pr-[5px] pb-[5px] pl-[10px]">
        <div className="flex w-[316px] flex-col">
          <fieldset className="h-[172px] border border-[#dcdddf] px-[10px] pt-[9px]">
            <legend className="ml-px px-[4px] leading-[16px] font-bold text-[#800000] underline underline-offset-2">
              Charter Party Details
            </legend>
            {[
              ["Cargo Quantity", "45,000.000"],
              ["L/D Rate in CP", "7,000.000"],
              ["Demurrage Rate", "20,000.000"],
              ["Despatch Rate", "10,000.000"],
            ].map(([label, value], i) => (
              <div key={label} className={LINE}>
                <label htmlFor={`cp${i}`} className={clsx(TEXT, "w-[118px]")}>{label}</label>
                <Field id={`cp${i}`} value={value} width="w-[121px]" />
                {i === 3 && <Check label="DHD" checked className="ml-[11px] h-[21px]" />}
              </div>
            ))}
            <div className={LINE}>
              <label htmlFor="terms" className={clsx(TEXT, "w-[118px]")}>Terms</label>
              <Terms />
            </div>
          </fieldset>
          <label htmlFor="remark" className="mt-[16px] mb-[6px] ml-[8px] h-[18px] font-bold text-[#800000] underline underline-offset-2">
            Remark
          </label>
          <textarea id="remark" className="h-[275px] w-full resize-none border border-[#c3c5cb] bg-white" />
          <div className="mt-[4px] flex justify-end gap-[8px]">
            <button type="button" className={clsx(BTN, "h-[23px] w-[80px]")}>OK</button>
            <button type="button" className={clsx(BTN, "h-[23px] w-[80px]")}>Cancel</button>
          </div>
        </div>

        <div className="mt-[8px] grow border border-[#dcdddf] pt-[18px] pr-[9px] pb-[10px] pl-[12px]">
          <div className="flex h-[26px] items-start">
            <span className={clsx(TEXT, "w-[94px]")}>Interval</span>
            <div className="flex h-[21px] gap-[52px]">
              <Radio name="interval" label="Days" checked gap="gap-[4px]" />
              <Radio name="interval" label="Hours" gap="gap-[4px]" />
            </div>
          </div>
          {rateRow("L/D Rate in CP", "rate-cp", true)}
          {rateRow("L/D Rate Actual", "rate-actual", false)}
          <div className="h-[10px] pt-[2px]"><hr className="border-[#b5b6b8]" /></div>
          <div className={clsx(LINE, "justify-end")}>
            <Check label="Holiday Constant" className="mr-[15px] h-[21px]" />
            <Field value="0.000" yellow dim label="Holiday Constant days" />
          </div>
          {sumRow(<><a href="#stay" className="mr-[2px] text-[#2222ee] underline">Holidays</a> during port stay</>, "stay", "0.000", false)}
          {sumRow(<><a href="#worked" className="mr-[2px] text-[#2222ee] underline">Holidays</a> to be worked</>, "worked", "0.000", false)}
          <div className="h-[55px]" />
          {sumRow("Working time not counted, if any", "uncounted", "0.500", false)}
          <div className={clsx(LINE, "justify-end")}>
            <Field value="0.500" yellow label="Time allowed" />
          </div>
          <div className={clsx(LINE, "justify-end")}>
            <Field value="0.000" label="Time used" />
          </div>
          <div className="h-[9px] pt-[2px]"><hr className="border-[#b5b6b8]" /></div>
          <div className="h-[31px]">{sumRow(<strong>Laytime Saved</strong>, "saved", "0.500", true, null, "mr-[11px]")}</div>
          {sumRow(
            <strong className="text-[#008000]">Despatch Money</strong>,
            "money",
            "5,000.000",
            true,
            <Check label="Apply" checked className="h-[21px] pl-[3px]" />,
            "mr-[11px]"
          )}
          <div className="h-[11px] pt-[2px]"><hr className="border-[#b5b6b8]" /></div>
          {sumRow("Port work day", "work-day", "6.429", true, <Check label="Apply" checked className="h-[21px] pl-[3px]" />)}
          {sumRow("Port idle day", "idle-day", "0.500", true, <Check label="Apply" checked className="h-[21px] pl-[3px]" />)}
          {sumRow("Port stay total", "total", "6.929", true)}
        </div>
      </div>
    </div>
  );
}

// ---------- guide notes over the windows ----------

const notes = [
  { no: 1, box: "left-[297px] top-[195px] w-[379px] h-[55px]", dot: "left-[273px] top-[178px]", text: "Click magnifier icon in L/D Rate." },
  { no: 2, box: "left-[1005px] top-[284px] w-[344px] h-[55px]", dot: "left-[983px] top-[268px]", text: "“Laytime Calculator” pops up." },
  { no: 3, box: "left-[887px] top-[573px] w-[533px] h-[67px]", dot: "left-[863px] top-[557px]", text: "Choose Terms and Holidays during port stay and to be worked." },
  { no: 4, box: "left-[1005px] top-[733px] w-[143px] h-[54px]", dot: "left-[982px] top-[716px]", text: "Click “OK”." },
];

function Notes() {
  return (
    <div className="[font-family:'DejaVu_Sans',sans-serif]">
      <div className="pointer-events-none absolute top-[437px] left-[898px] h-[109px] w-[191px] border-2 border-dashed border-[#ff0000]" />
      <div className="pointer-events-none absolute top-[413px] left-[1158px] h-[97px] w-[286px] border-2 border-dashed border-[#ff0000]" />
      <svg viewBox="0 0 1456 830" className="pointer-events-none absolute top-0 left-0 h-[830px] w-[1456px]" fill="none" aria-hidden="true">
        <defs>
          <marker id="tip" viewBox="0 0 12 12" refX="11" refY="6" markerWidth="13" markerHeight="13" markerUnits="userSpaceOnUse" orient="auto">
            <path d="M0 0l12 6-12 6z" fill="#000" />
          </marker>
        </defs>
        <g stroke="#000" strokeWidth="1.500">
          <path d="M487 249L655 453" markerEnd="url(#tip)" />
          <path d="M1153 574L995 545" markerEnd="url(#tip)" />
          <path d="M1153 574L1300 510" markerEnd="url(#tip)" />
        </g>
        <g stroke="#f00" strokeDasharray="4 3">
          <ellipse cx="673" cy="454" rx="17" ry="41" />
          <ellipse cx="960" cy="802" rx="48" ry="18" />
        </g>
      </svg>
      {notes.map((n) => (
        <div key={n.no}>
          <div className={clsx("absolute flex items-center border border-black bg-[#6e96c8] pr-[10px] pl-[14px] text-[21px] leading-[25px] text-black", n.box)}>
            {n.text}
          </div>
          <div className={clsx("absolute flex size-[36px] items-center justify-center rounded-full border border-black bg-[#7fa2cf] text-[21px] text-white", n.dot)}>
            {n.no}
          </div>
        </div>
      ))}
    </div>
  );
}

export default function App() {
  return (
    <div className="relative min-h-screen overflow-hidden bg-white pt-px pl-px text-[12px] leading-[16px] text-[#1a1a1a] [font-family:'DejaVu_Sans_Condensed','Noto_Sans',sans-serif]">
      <main className="mr-[84px] bg-[#c3c5cf]">
        <TitleBar />
        <div className="mr-[4px] ml-[6px] bg-white">
          <nav className="flex h-[25px] items-center gap-[14px] pl-[6px] text-[13px] [font-family:'Noto_Sans',sans-serif]">
            {["File", "View", "Tools", "Help"].map((m) => (
              <button key={m} type="button">
                <u>{m[0]}</u>
                {m.slice(1)}
              </button>
            ))}
          </nav>
          <Toolbar />
          <Tabs />
          <div className="bg-[#f1f1f2] pr-[6px] pl-[7px]">
            <VesselParticular />
            <Cargo />
            <PortRotation />
            <Expenses />
          </div>
          <StatusBar />
        </div>
        <div className="h-[3px]" />
      </main>
      <LaytimeDialog />
      <Notes />
    </div>
  );
}
